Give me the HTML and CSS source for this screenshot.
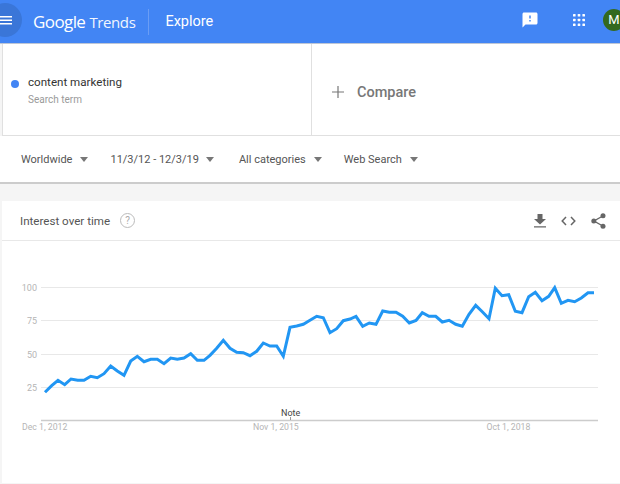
FILE: index.html
```html
<!DOCTYPE html>
<html lang="en">
<head>
    <meta charset="UTF-8">
    <meta name="viewport" content="width=device-width, initial-scale=1.0">
    <title>Google Trends - Explore</title>
    <link rel="stylesheet" href="styles.css">
</head>
<body>
    <header class="topbar">
        <div class="menu-btn">
            <svg width="12" height="9" viewBox="0 0 12 9"><path d="M0 0h12v1.500H0zM0 3.500h12v1.500H0zM0 7h12v1.500H0z" fill="#fff"/></svg>
        </div>
        <div class="logo"><span class="logo-google">Google</span> <span class="logo-trends">Trends</span></div>
        <div class="topbar-title">Explore</div>
        <div class="topbar-actions">
            <svg class="feedback" width="18" height="18" viewBox="0 0 24 24"><path d="M20 2H4c-1.100 0-1.990.9-1.990 2L2 22l4-4h14c1.100 0 2-.9 2-2V4c0-1.100-.9-2-2-2zm-7 12h-2v-2h2v2zm0-4h-2V6h2v4z" fill="#fff"/></svg>
            <svg class="apps" width="12" height="12" viewBox="0 0 12 12" fill="#fff">
                <rect x="0" y="0" width="2.600" height="2.600" rx=".6"/><rect x="4.700" y="0" width="2.600" height="2.600" rx=".6"/><rect x="9.400" y="0" width="2.600" height="2.600" rx=".6"/>
                <rect x="0" y="4.700" width="2.600" height="2.600" rx=".6"/><rect x="4.700" y="4.700" width="2.600" height="2.600" rx=".6"/><rect x="9.400" y="4.700" width="2.600" height="2.600" rx=".6"/>
                <rect x="0" y="9.400" width="2.600" height="2.600" rx=".6"/><rect x="4.700" y="9.400" width="2.600" height="2.600" rx=".6"/><rect x="9.400" y="9.400" width="2.600" height="2.600" rx=".6"/>
            </svg>
            <div class="avatar">M</div>
        </div>
    </header>

    <!-- Search terms -->
    <section class="terms">
        <div class="term">
            <span class="term-dot"></span>
            <div>
                <div class="term-name">content marketing</div>
                <div class="term-type">Search term</div>
            </div>
        </div>
        <div class="compare">
            <svg width="12" height="12" viewBox="0 0 12 12"><path d="M5.400 0h1.200v12H5.400zM0 5.400h12v1.200H0z" fill="#777"/></svg>
            <span>Compare</span>
        </div>
    </section>

    <!-- Filters -->
    <section class="filters">
        <div class="filter filter-geo">Worldwide<span class="caret"></span></div>
        <div class="filter filter-date">11/3/12 - 12/3/19<span class="caret"></span></div>
        <div class="filter filter-cat">All categories<span class="caret"></span></div>
        <div class="filter">Web Search<span class="caret"></span></div>
    </section>

    <!-- Chart card -->
    <section class="card">
        <div class="card-head">
            <span class="card-title">Interest over time</span>
            <span class="help">?</span>
            <div class="card-actions">
                <svg width="12" height="14" viewBox="0 0 12 14"><path d="M3.500 0h5v5H12L6 10.500 0 5h3.500zM0 12.200h12v1.300H0z" fill="#666"/></svg>
                <svg width="15" height="10" viewBox="0 0 15 10"><path d="M5 1 1.200 5 5 9M10 1l3.800 4L10 9" fill="none" stroke="#666" stroke-width="1.500"/></svg>
                <svg width="15" height="16" viewBox="0 0 15 16"><path d="M11.800 3 3 8l8.800 5" fill="none" stroke="#666" stroke-width="1.400"/><circle cx="12" cy="2.700" r="2.500" fill="#666"/><circle cx="2.800" cy="8" r="2.500" fill="#666"/><circle cx="12" cy="13.300" r="2.500" fill="#666"/></svg>
            </div>
        </div>
        <svg class="chart" width="618" height="200" viewBox="2 241 618 200">
            <g class="grid">
                <line x1="41" x2="598" y1="287.500" y2="287.500"/>
                <line x1="41" x2="598" y1="320.500" y2="320.500"/>
                <line x1="41" x2="598" y1="354.500" y2="354.500"/>
                <line x1="41" x2="598" y1="387.500" y2="387.500"/>
            </g>
            <line class="axis" x1="41" x2="598" y1="420.500" y2="420.500"/>
            <line class="tick" x1="290.500" x2="290.500" y1="417" y2="420"/>
            <g class="y-labels">
                <text x="37" y="291">100</text>
                <text x="37" y="324">75</text>
                <text x="37" y="358">50</text>
                <text x="37" y="391">25</text>
            </g>
            <g class="x-labels">
                <text x="22" y="430">Dec 1, 2012</text>
                <text x="253" y="430">Nov 1, 2015</text>
                <text x="486.500" y="430">Oct 1, 2018</text>
            </g>
            <text class="note" x="281" y="416">Note</text>
            <polyline class="trend" points="45,392.300 51.700,385.700 58,380.300 64.700,384.700 71,379 77.700,380.300 84,380.300 90.700,376.300 97.300,377.700 104,373.700 110.700,366 117.300,371 124,375.300 130.700,361 137.300,356.300 144,361.700 150.700,359.300 157.300,359.300 164,363.700 170.700,358 177.300,359.300 184,358 190.700,353.700 197.300,360.300 204,360.300 210,355.300 216.700,348.300 223.300,340.300 230,348.300 236.700,352.300 243.300,352.700 250,355.700 256.700,351.300 263.300,343 270,346 276.700,346 283.300,356.300 290,327.300 296.700,326 303.300,324.300 310,320.300 316.700,316.300 323.300,317.700 330,332.700 336.700,328.700 343.300,320.700 350,319 356,316.300 362.700,326.300 369.300,323 376,324.300 382.700,311 389.300,312.300 396,312.300 402.700,316.300 409.300,323 416,320.500 422.300,312.700 429,316.300 435.700,316.300 442.300,322 449,320.300 455.700,324.300 462.300,326.300 469,314.300 475.700,305.300 482.300,311.700 489,318.700 495.300,288.300 502,295.700 508.700,294.700 515.300,311.300 522,312.700 528.700,296.700 535.300,292.300 542,300.700 548.700,296.300 554.700,287.700 561.300,303.300 568,300.300 574.700,301.700 581.300,298 588,292.700 594,292.700"/>
        </svg>
    </section>
</body>
</html>
```

FILE: styles.css
```css
html, body {
    height: 100%;
}

body {
    font-family: 'Roboto', 'Liberation Sans', sans-serif;
    background: #f5f5f5;
    color: #333;
    margin: 0;
    padding: 0;
    overflow: hidden;
}

.topbar {
    display: flex;
    align-items: center;
    height: 43px;
    background: #4285f4;
    color: #fff;
    border-bottom: 1px solid #bdc6d6;
    overflow: hidden;
}

.menu-btn {
    display: flex;
    align-items: center;
    justify-content: flex-end;
    flex: none;
    box-sizing: border-box;
    width: 34px;
    height: 34px;
    margin: 0 0 3px -12px;
    padding-right: 10px;
    border-radius: 50%;
    background: #3a76d8;
}

.logo {
    margin-left: 11px;
    padding-right: 13px;
    border-right: 1px solid #6a9df5;
    font-family: 'Open Sans', sans-serif;
    line-height: 26px;
    white-space: nowrap;
}

.logo-google {
    font-size: 17px;
    letter-spacing: -0.6px;
}

.logo-trends {
    font-size: 15px;
    letter-spacing: -0.4px;
    color: #f0f5fe;
}

.topbar-title {
    margin-left: 16px;
    font-size: 14.500px;
}

.topbar-actions {
    display: flex;
    align-items: center;
    margin: 0 0 3px auto;
}

.feedback {
    margin-right: 34px;
}

.apps {
    margin-right: 18px;
}

.avatar {
    flex: none;
    width: 22px;
    height: 22px;
    margin-right: -5px;
    border-radius: 50%;
    background: #33691e;
    font-size: 13px;
    line-height: 22px;
    text-align: center;
}

.terms {
    display: flex;
    height: 91px;
    margin-left: 2px;
    background: #fff;
    border-left: 1px solid #e0e0e0;
    border-bottom: 1px solid #e0e0e0;
}

.term {
    display: flex;
    align-items: flex-start;
    box-sizing: border-box;
    width: 309px;
    padding: 30px 0 0 8px;
    border-right: 1px solid #e0e0e0;
}

.term-dot {
    flex: none;
    width: 8px;
    height: 8px;
    margin: 6px 9px 0 0;
    border-radius: 50%;
    background: #4285f4;
}

.term-name {
    font-size: 11.600px;
    line-height: 16px;
    color: #333;
}

.term-type {
    margin-top: 3px;
    font-size: 10px;
    line-height: 14px;
    color: #9a9a9a;
}

.compare {
    display: flex;
    align-items: center;
    padding: 5px 0 0 20px;
    font-size: 14.500px;
    font-weight: 500;
    color: #777;
}

.compare span {
    margin-left: 13px;
}

.filters {
    display: flex;
    align-items: center;
    height: 46px;
    padding-left: 21px;
    background: #fff;
    border-bottom: 2px solid #ccc;
    font-size: 11px;
    color: #555;
}

.filter {
    display: flex;
    align-items: center;
    white-space: nowrap;
}

.filter-geo {
    margin-right: 22px;
}

.filter-date {
    margin-right: 25px;
}

.filter-date .caret {
    margin-left: 7px;
}

.filter-cat {
    margin-right: 22px;
}

.caret {
    width: 0;
    height: 0;
    margin-left: 8px;
    border-left: 4px solid transparent;
    border-right: 4px solid transparent;
    border-top: 5px solid #777;
}

.card {
    margin: 17px 0 0 2px;
    height: 282px;
    background: #fff;
}

.card-head {
    display: flex;
    align-items: center;
    box-sizing: border-box;
    height: 40px;
    padding: 0 14px 0 18px;
    border-bottom: 1px solid #e8e8e8;
}

.card-title {
    font-size: 11.600px;
    color: #555;
}

.help {
    width: 13px;
    height: 13px;
    margin-left: 10px;
    border: 1px solid #bbb;
    border-radius: 50%;
    font-size: 10px;
    line-height: 13px;
    text-align: center;
    color: #aaa;
}

.card-actions {
    display: flex;
    align-items: center;
    gap: 15px;
    margin-left: auto;
}

.chart {
    display: block;
}

.grid line {
    stroke: #e8e8e8;
    stroke-width: 1;
}

.axis {
    stroke: #ccc;
    stroke-width: 1.500;
}

.tick {
    stroke: #999;
}

.y-labels text {
    font-size: 9px;
    fill: #b5b5b5;
    text-anchor: end;
}

.x-labels text {
    font-size: 8.700px;
    fill: #b5b5b5;
}

.note {
    font-size: 9px;
    fill: #444;
}

.trend {
    fill: none;
    stroke: #2196f3;
    stroke-width: 3;
    stroke-linejoin: miter;
}
```
